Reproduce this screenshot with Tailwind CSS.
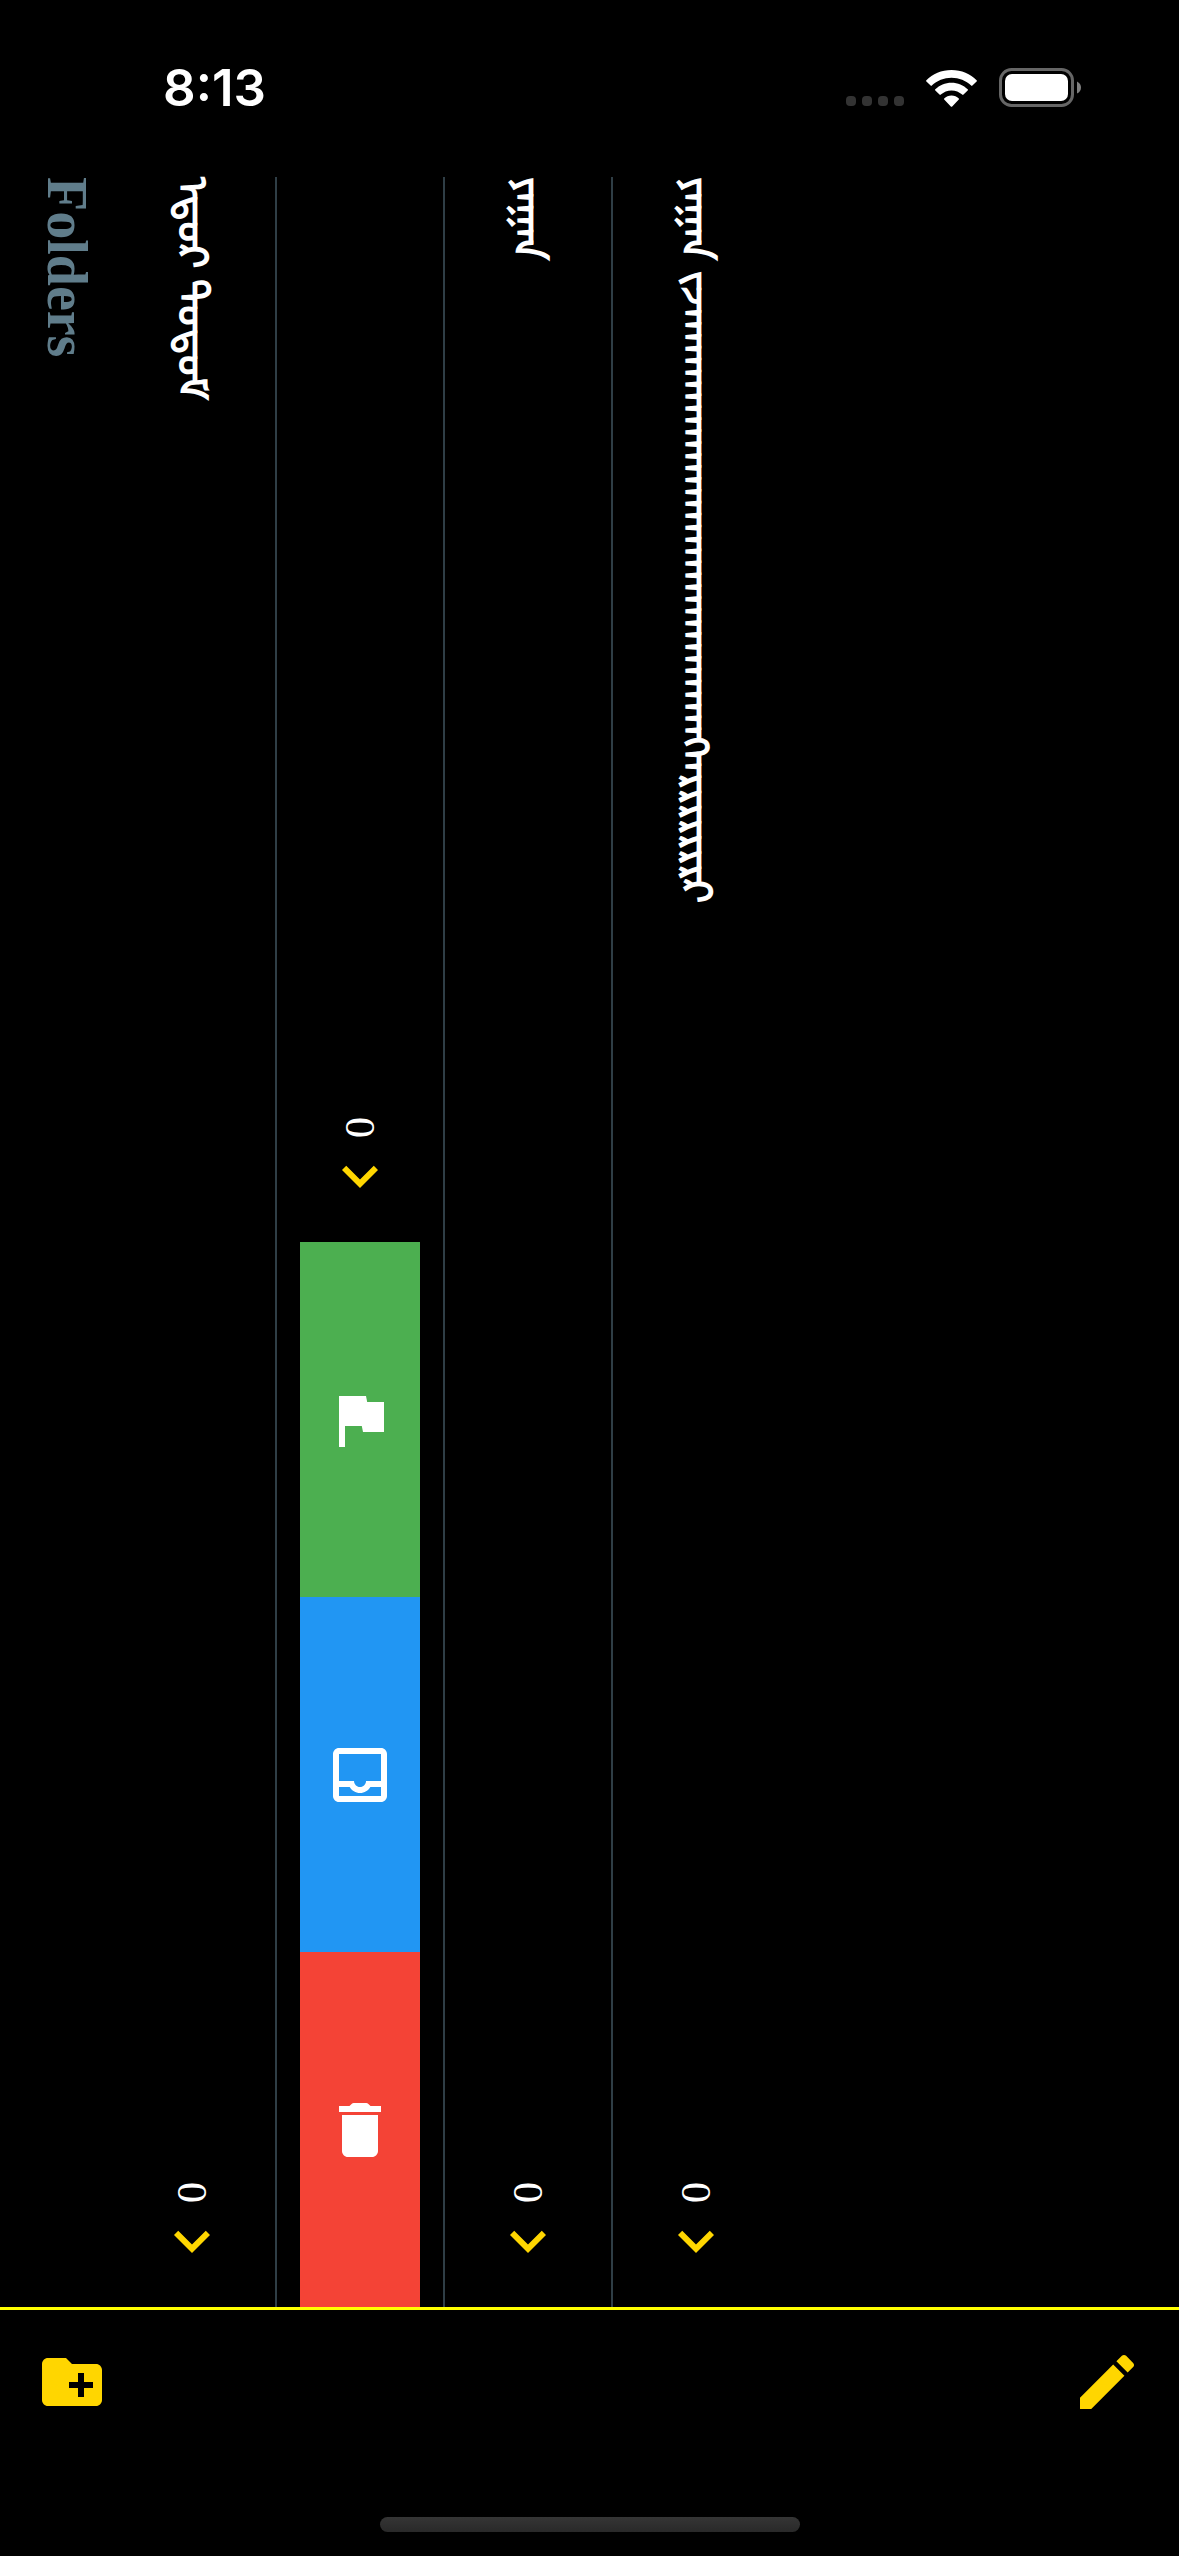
<!DOCTYPE html>
<html lang="mn">
<head>
<meta charset="utf-8">
<meta name="viewport" content="width=device-width, initial-scale=1">
<title>Folders</title>
<script src="https://cdn.jsdelivr.net/npm/@tailwindcss/browser@4"></script>
</head>
<body class="flex min-h-screen flex-col bg-black font-['Liberation_Serif','Noto_Sans_Mongolian',serif] text-white">

<!-- Status bar -->
<header class="flex h-[177px] shrink-0 items-start justify-between pt-[60px] pr-[98px] pl-[163px]">
  <time class="font-['Inter',sans-serif] text-[51px] leading-[56px] font-semibold">8:13</time>
  <div class="flex items-center gap-[22px] pt-2">
    <div class="flex gap-[6px] pt-[27px]">
      <span class="size-[10px] rounded-[4px] bg-[#333333]"></span>
      <span class="size-[10px] rounded-[4px] bg-[#333333]"></span>
      <span class="size-[10px] rounded-[4px] bg-[#333333]"></span>
      <span class="size-[10px] rounded-[4px] bg-[#333333]"></span>
    </div>
    <svg class="h-[38px] w-[51px]" viewBox="0 0 51 38" fill="#fff" aria-label="Wi-Fi">
      <path d="M25.500 1C35.500 1 44.500 5 50.600 11.300Q51.200 12 50.600 12.600L46.400 16.600Q45.800 17.200 45.200 16.600C40 11.600 33 8.700 25.500 8.700S11 11.600 5.800 16.600Q5.200 17.200 4.600 16.600L.4 12.600Q-.2 12 .4 11.300C6.500 5 15.500 1 25.500 1Z"/>
      <path d="M25.500 13.700C31.800 13.700 37.500 16.200 41.700 20.300Q42.300 20.900 41.700 21.500L37.500 25.600Q36.900 26.200 36.200 25.600C33.300 22.900 29.600 21.400 25.500 21.400S17.700 22.900 14.800 25.600Q14.100 26.200 13.500 25.600L9.300 21.500Q8.700 20.900 9.300 20.300C13.500 16.200 19.200 13.700 25.500 13.700Z"/>
      <path d="M25.500 26.500C28.300 26.500 30.900 27.600 32.800 29.400Q33.400 30 32.800 30.600L26.200 37.400Q25.500 38 24.800 37.400L18.200 30.600Q17.600 30 18.200 29.400C20.100 27.600 22.700 26.500 25.500 26.500Z"/>
    </svg>
    <svg class="h-[39px] w-[82px]" viewBox="0 0 82 39" aria-label="Battery">
      <rect x="1.500" y="1.500" width="72" height="36" rx="11" fill="none" stroke="#666" stroke-width="3"/>
      <rect x="6" y="6" width="63" height="27" rx="7" fill="#fff"/>
      <path d="M78 13.500Q82 15.500 82 19.500T78 25.500Z" fill="#808080"/>
    </svg>
  </div>
</header>

<!-- Vertical list, read left to right -->
<main class="flex grow">
  <h1 class="w-[109px] shrink-0 pl-[35px] text-[56px] leading-[64px] font-bold text-[#607d8b] [writing-mode:vertical-lr]">Folders</h1>

  <a href="#" class="flex w-[168px] shrink-0 flex-col items-center justify-between border-r-2 border-[#2f3e46] pb-[30px]">
    <span class="text-[42px] leading-[64px] font-bold [writing-mode:vertical-lr]">ᠡᠳᠦᠷ ᠲᠤᠲᠤᠮ</span>
    <span class="flex flex-col items-center gap-[2px]">
      <span class="text-[42px] leading-[48px] [writing-mode:vertical-lr]">0</span>
      <svg class="size-[72px]" viewBox="0 0 24 24" fill="#ffd600"><path d="M16.590 8.590 12 13.170 7.410 8.590 6 10l6 6 6-6z"/></svg>
    </span>
  </a>

  <div class="grid w-[168px] shrink-0 grid-rows-2 border-r-2 border-[#2f3e46]">
    <a href="#" class="flex flex-col items-center justify-end gap-[2px] pb-[30px]">
      <span class="text-[42px] leading-[48px] [writing-mode:vertical-lr]">0</span>
      <svg class="size-[72px]" viewBox="0 0 24 24" fill="#ffd600"><path d="M16.590 8.590 12 13.170 7.410 8.590 6 10l6 6 6-6z"/></svg>
    </a>
    <div class="grid grid-rows-3 px-[23px]">
      <button type="button" aria-label="Flag" class="flex items-center justify-center bg-[#4caf50]">
        <svg class="size-[72px]" viewBox="0 0 24 24" fill="#fff"><path d="M14.400 6 14 4H5v17h2v-7h5.600l.4 2h7V6z"/></svg>
      </button>
      <button type="button" aria-label="Archive" class="flex items-center justify-center bg-[#2196f3]">
        <svg class="size-[72px]" viewBox="0 0 24 24" fill="#fff"><path d="M19 3H5c-1.100 0-2 .9-2 2v14c0 1.100.9 2 2 2h14c1.100 0 2-.9 2-2V5c0-1.100-.9-2-2-2zm0 16H5v-3h3.560c.69 1.190 1.970 2 3.450 2s2.750-.81 3.450-2H19v3zm0-5h-4.990c0 1.100-.9 2-2 2s-2-.9-2-2H5V5h14v9z"/></svg>
      </button>
      <button type="button" aria-label="Delete" class="flex items-center justify-center bg-[#f44336]">
        <svg class="size-[72px]" viewBox="0 0 24 24" fill="#fff"><path d="M6 19c0 1.100.9 2 2 2h8c1.100 0 2-.9 2-2V7H6v12zM19 4h-3.500l-.7-.7c-.2-.2-.45-.3-.7-.3H9.900c-.25 0-.5.100-.7.300L8.500 4H5v2h14V4z"/></svg>
      </button>
    </div>
  </div>

  <a href="#" class="flex w-[168px] shrink-0 flex-col items-center justify-between border-r-2 border-[#2f3e46] pb-[30px]">
    <span class="text-[42px] leading-[64px] font-bold [writing-mode:vertical-lr]">ᠶᠠᠭᠠᠨ</span>
    <span class="flex flex-col items-center gap-[2px]">
      <span class="text-[42px] leading-[48px] [writing-mode:vertical-lr]">0</span>
      <svg class="size-[72px]" viewBox="0 0 24 24" fill="#ffd600"><path d="M16.590 8.590 12 13.170 7.410 8.590 6 10l6 6 6-6z"/></svg>
    </span>
  </a>

  <a href="#" class="flex w-[168px] shrink-0 flex-col items-center justify-between pr-[2px] pb-[30px]">
    <span class="text-[42px] leading-[64px] font-bold [writing-mode:vertical-lr]">ᠶᠠᠭᠠᠨ ᠵᠵᠠᠠᠠᠠᠠᠠᠠᠠᠠᠠᠠᠠᠠᠠᠠᠠᠠᠠᠠᠠᠠᠠᠠᠠᠠᠠᠠᠠᠠᠠᠠᠠᠠᠠᠠᠩᠠᠠᠷᠷᠷᠷᠷᠷᠷᠷ</span>
    <span class="flex flex-col items-center gap-[2px]">
      <span class="text-[42px] leading-[48px] [writing-mode:vertical-lr]">0</span>
      <svg class="size-[72px]" viewBox="0 0 24 24" fill="#ffd600"><path d="M16.590 8.590 12 13.170 7.410 8.590 6 10l6 6 6-6z"/></svg>
    </span>
  </a>
</main>

<!-- Toolbar -->
<footer class="flex h-[249px] shrink-0 flex-col justify-between border-t-3 border-[#ffff00]">
  <nav class="flex h-[144px] items-center justify-between px-9">
    <button type="button" aria-label="New folder"><svg class="size-[72px]" viewBox="0 0 24 24" fill="#ffd600"><path d="M20 6h-8l-2-2H4c-1.110 0-1.990.89-1.990 2L2 18c0 1.110.89 2 2 2h16c1.110 0 2-.89 2-2V8c0-1.110-.89-2-2-2zm-1 8h-3v3h-2v-3h-3v-2h3V9h2v3h3v2z"/></svg></button>
    <button type="button" aria-label="New note"><svg class="size-[72px]" viewBox="0 0 24 24" fill="#ffd600"><path d="M3 17.250V21h3.750L17.810 9.940l-3.750-3.750L3 17.250zM20.710 7.040c.39-.39.39-1.020 0-1.410l-2.340-2.340c-.39-.39-1.020-.39-1.410 0l-1.830 1.830 3.750 3.750 1.830-1.830z"/></svg></button>
  </nav>
  <div class="mb-6 h-[15px] w-[420px] self-center rounded-full bg-linear-to-b from-[#353535] to-[#292929]"></div>
</footer>
</body>
</html>
